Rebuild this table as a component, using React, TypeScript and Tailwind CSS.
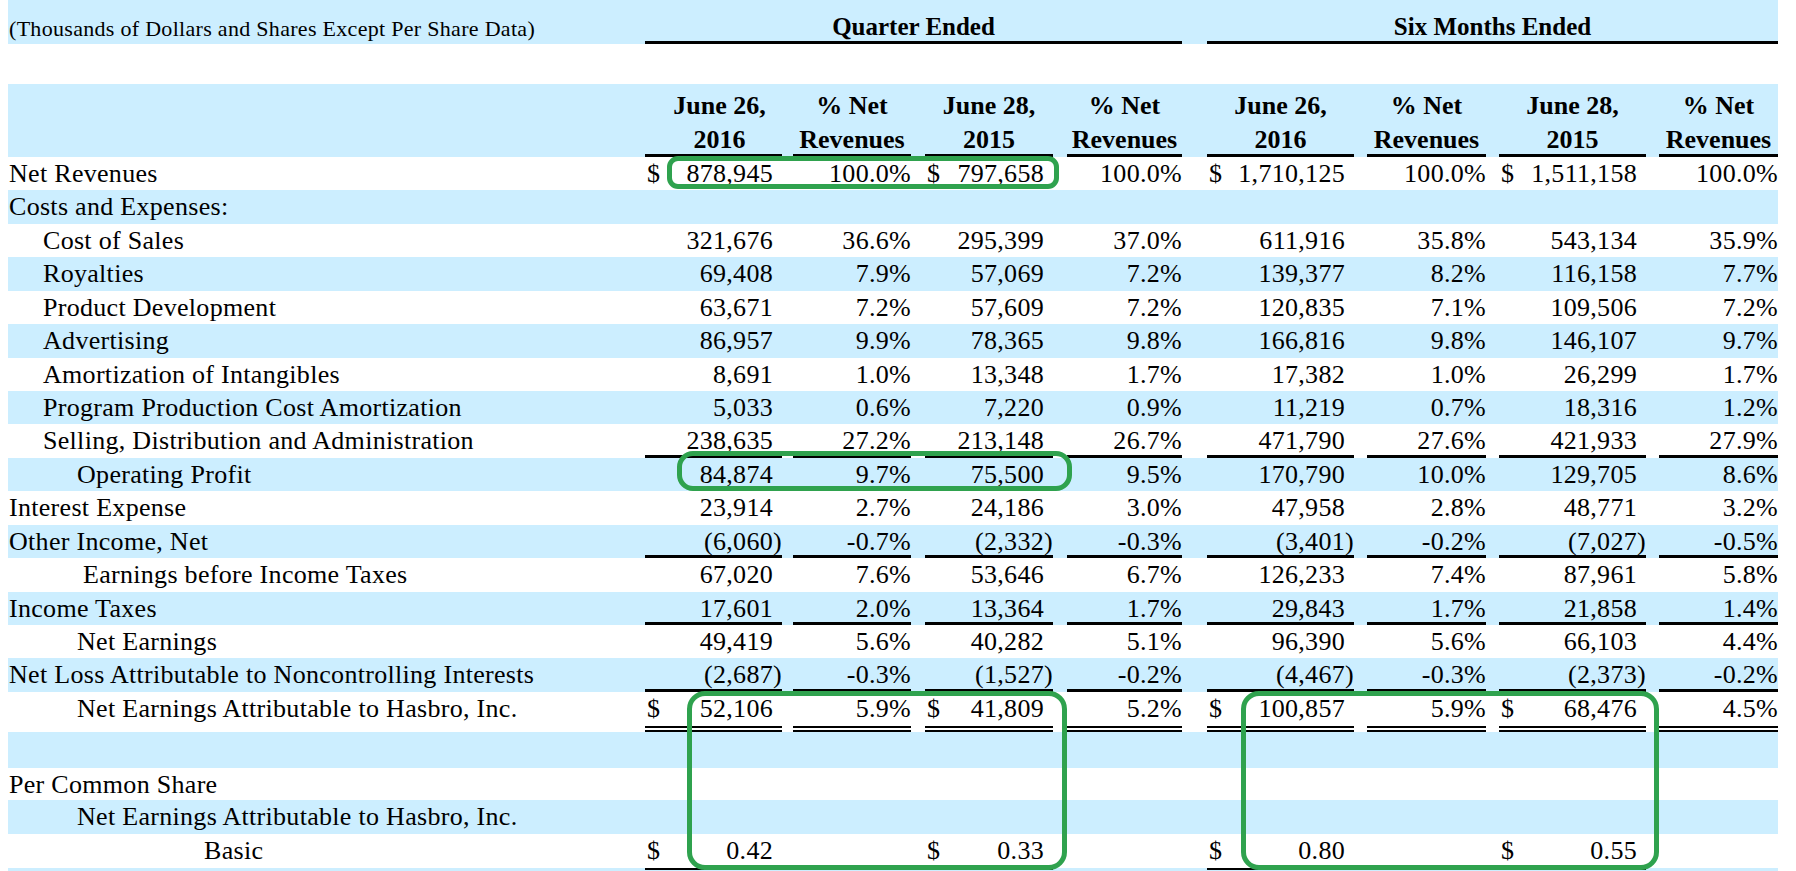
import React from "react";

type Line = "single" | "double" | null;

type Row = {
  label: string;
  indent: string;
  h: string;
  blue: boolean;
  vals?: string[];
  dollars?: boolean;
  line?: Line;
};

const cols = [
  { w: "w-[137px]", ml: "", money: true },
  { w: "w-[118px]", ml: "ml-[11px]", money: false },
  { w: "w-[128px]", ml: "ml-[14px]", money: true },
  { w: "w-[115px]", ml: "ml-[14px]", money: false },
  { w: "w-[147px]", ml: "ml-[25px]", money: true },
  { w: "w-[119px]", ml: "ml-[13px]", money: false },
  { w: "w-[147px]", ml: "ml-[13px]", money: true },
  { w: "w-[119px]", ml: "ml-[13px]", money: false },
];

const heads = [
  ["June 26,", "2016"],
  ["% Net", "Revenues"],
  ["June 28,", "2015"],
  ["% Net", "Revenues"],
  ["June 26,", "2016"],
  ["% Net", "Revenues"],
  ["June 28,", "2015"],
  ["% Net", "Revenues"],
];

const rows: Row[] = [
  { label: "Net Revenues", indent: "pl-px", h: "h-[33px]", blue: false, dollars: true, vals: ["878,945", "100.0%", "797,658", "100.0%", "1,710,125", "100.0%", "1,511,158", "100.0%"] },
  { label: "Costs and Expenses:", indent: "pl-px", h: "h-[34px]", blue: true },
  { label: "Cost of Sales", indent: "pl-[35px]", h: "h-[33px]", blue: false, vals: ["321,676", "36.6%", "295,399", "37.0%", "611,916", "35.8%", "543,134", "35.9%"] },
  { label: "Royalties", indent: "pl-[35px]", h: "h-[34px]", blue: true, vals: ["69,408", "7.9%", "57,069", "7.2%", "139,377", "8.2%", "116,158", "7.7%"] },
  { label: "Product Development", indent: "pl-[35px]", h: "h-[33px]", blue: false, vals: ["63,671", "7.2%", "57,609", "7.2%", "120,835", "7.1%", "109,506", "7.2%"] },
  { label: "Advertising", indent: "pl-[35px]", h: "h-[34px]", blue: true, vals: ["86,957", "9.9%", "78,365", "9.8%", "166,816", "9.8%", "146,107", "9.7%"] },
  { label: "Amortization of Intangibles", indent: "pl-[35px]", h: "h-[33px]", blue: false, vals: ["8,691", "1.0%", "13,348", "1.7%", "17,382", "1.0%", "26,299", "1.7%"] },
  { label: "Program Production Cost Amortization", indent: "pl-[35px]", h: "h-[33px]", blue: true, vals: ["5,033", "0.6%", "7,220", "0.9%", "11,219", "0.7%", "18,316", "1.2%"] },
  { label: "Selling, Distribution and Administration", indent: "pl-[35px]", h: "h-[34px]", blue: false, line: "single", vals: ["238,635", "27.2%", "213,148", "26.7%", "471,790", "27.6%", "421,933", "27.9%"] },
  { label: "Operating Profit", indent: "pl-[69px]", h: "h-[33px]", blue: true, vals: ["84,874", "9.7%", "75,500", "9.5%", "170,790", "10.0%", "129,705", "8.6%"] },
  { label: "Interest Expense", indent: "pl-px", h: "h-[34px]", blue: false, vals: ["23,914", "2.7%", "24,186", "3.0%", "47,958", "2.8%", "48,771", "3.2%"] },
  { label: "Other Income, Net", indent: "pl-px", h: "h-[33px]", blue: true, line: "single", vals: ["(6,060)", "-0.7%", "(2,332)", "-0.3%", "(3,401)", "-0.2%", "(7,027)", "-0.5%"] },
  { label: "Earnings before Income Taxes", indent: "pl-[75px]", h: "h-[34px]", blue: false, vals: ["67,020", "7.6%", "53,646", "6.7%", "126,233", "7.4%", "87,961", "5.8%"] },
  { label: "Income Taxes", indent: "pl-px", h: "h-[33px]", blue: true, line: "single", vals: ["17,601", "2.0%", "13,364", "1.7%", "29,843", "1.7%", "21,858", "1.4%"] },
  { label: "Net Earnings", indent: "pl-[69px]", h: "h-[33px]", blue: false, vals: ["49,419", "5.6%", "40,282", "5.1%", "96,390", "5.6%", "66,103", "4.4%"] },
  { label: "Net Loss Attributable to Noncontrolling Interests", indent: "pl-px", h: "h-[34px]", blue: true, line: "single", vals: ["(2,687)", "-0.3%", "(1,527)", "-0.2%", "(4,467)", "-0.3%", "(2,373)", "-0.2%"] },
  { label: "Net Earnings Attributable to Hasbro, Inc.", indent: "pl-[69px]", h: "h-[40px]", blue: false, dollars: true, line: "double", vals: ["52,106", "5.9%", "41,809", "5.2%", "100,857", "5.9%", "68,476", "4.5%"] },
  { label: "", indent: "pl-px", h: "h-[36px]", blue: true },
  { label: "Per Common Share", indent: "pl-px", h: "h-[32px]", blue: false },
  { label: "Net Earnings Attributable to Hasbro, Inc.", indent: "pl-[69px]", h: "h-[34px]", blue: true },
  { label: "Basic", indent: "pl-[196px]", h: "h-[34px]", blue: false, dollars: true, vals: ["0.42", "", "0.33", "", "0.80", "", "0.55", ""] },
];

function lineClass(line: Line | undefined) {
  if (line === "single") return "border-b-[3px] border-black";
  if (line === "double") return "border-b-[6px] border-double border-black";
  return "";
}

function MoneyCell({ v, dollar }: { v: string; dollar: boolean }) {
  const neg = v.endsWith(")");
  const body = neg ? v.slice(0, -1) : v;
  return (
    <>
      {dollar && <span className="pl-[2px]">$</span>}
      <span className="ml-auto">{body}</span>
      <span className="inline-block w-[9px]">{neg ? ")" : ""}</span>
    </>
  );
}

function DataRow({ row }: { row: Row }) {
  return (
    <div className={`flex w-[1770px] ${row.h} ${row.blue ? "bg-[#cceeff]" : "bg-white"}`}>
      <div className={`w-[637px] shrink-0 whitespace-nowrap ${row.indent}`}>{row.label}</div>
      {cols.map((c, i) => (
        <div key={i} className={`flex h-full shrink-0 ${c.w} ${c.ml} ${lineClass(row.line)}`}>
          {row.vals &&
            (c.money ? (
              <MoneyCell v={row.vals[i]} dollar={!!row.dollars} />
            ) : (
              <span className="ml-auto">{row.vals[i]}</span>
            ))}
        </div>
      ))}
    </div>
  );
}

export default function App() {
  return (
    <div className="relative min-h-screen overflow-hidden bg-white pl-2 font-['Liberation_Serif',serif] text-[26px] leading-[34px] tracking-[0.3px] text-black">
      {/* top band */}
      <div className="flex h-[44px] w-[1770px] bg-[#cceeff]">
        <div className="flex w-[637px] shrink-0 items-end pb-[4px] pl-px text-[22px] leading-[22px]">
          (Thousands of Dollars and Shares Except Per Share Data)
        </div>
        <div className="flex w-[537px] shrink-0 items-end justify-center border-b-[3px] border-black pb-[2px] text-[25px] font-bold leading-[25px] tracking-normal">
          Quarter Ended
        </div>
        <div className="ml-[25px] flex w-[571px] shrink-0 items-end justify-center border-b-[3px] border-black pb-[2px] text-[25px] font-bold leading-[25px] tracking-normal">
          Six Months Ended
        </div>
      </div>
      <div className="h-[40px] w-[1770px] bg-white" />

      {/* column headings */}
      <div className="flex h-[73px] w-[1770px] bg-[#cceeff]">
        <div className="w-[637px] shrink-0" />
        {cols.map((c, i) => (
          <div
            key={i}
            className={`flex shrink-0 flex-col items-center border-b-[3px] border-black pt-[5px] font-bold leading-[34px] tracking-normal ${c.w} ${c.ml} ${i === 0 ? "pl-[12px]" : ""}`}
          >
            <span>{heads[i][0]}</span>
            <span>{heads[i][1]}</span>
          </div>
        ))}
      </div>

      {rows.map((r, i) => (
        <DataRow key={i} row={r} />
      ))}

      {/* closing band with double rules under per-share figures */}
      <div className="flex h-[20px] w-[1770px] bg-[#cceeff]">
        <div className="w-[637px] shrink-0" />
        {cols.map((c, i) => (
          <div
            key={i}
            className={`shrink-0 ${c.w} ${c.ml} ${c.money ? "border-t-[6px] border-double border-black" : ""}`}
          />
        ))}
      </div>

      {/* green highlight marks */}
      <div className="absolute left-[667px] top-[156px] h-[33px] w-[392px] rounded-[11px] border-[5px] border-[#2fa24e]" />
      <div className="absolute left-[677px] top-[451px] h-[40px] w-[395px] rounded-[16px] border-[5px] border-[#2fa24e]" />
      <div className="absolute left-[687px] top-[691px] h-[179px] w-[380px] rounded-[18px] border-[5px] border-[#2fa24e]" />
      <div className="absolute left-[1241px] top-[691px] h-[179px] w-[418px] rounded-[18px] border-[5px] border-[#2fa24e]" />
    </div>
  );
}
